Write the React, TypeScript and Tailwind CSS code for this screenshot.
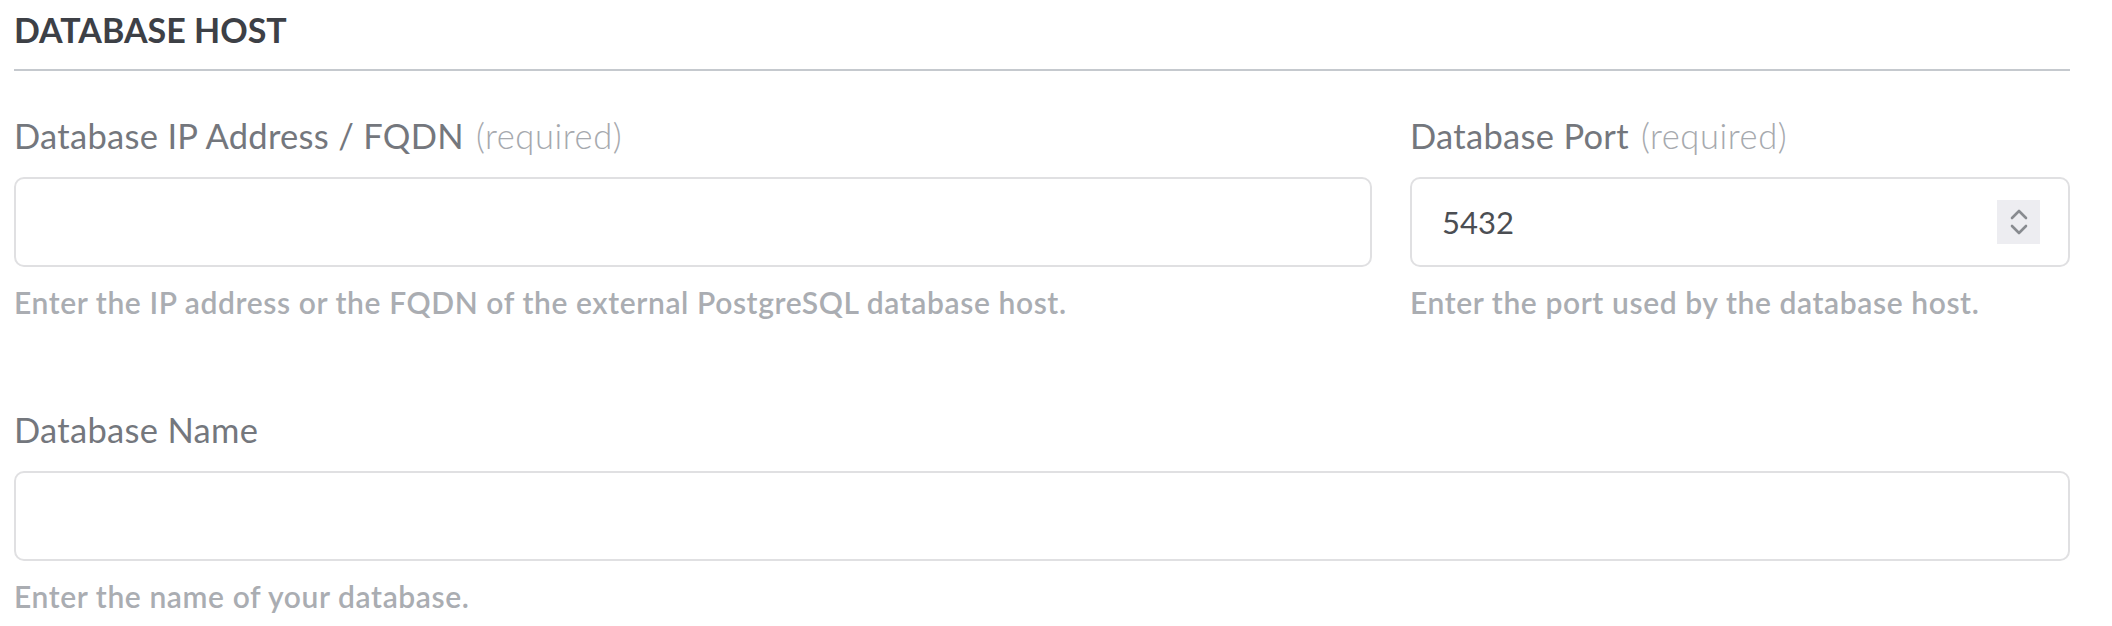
import type { ReactNode } from "react";

const font = { fontFamily: "Lato, 'Noto Sans', sans-serif" };

function Label({ text, required }: { text: string; required?: boolean }) {
  return (
    <label className="block text-[34.5px] leading-[40px] tracking-[0.3px] text-[#74777d] mb-[21px]">
      {text}
      {required && <span className="ml-[12px] font-light tracking-[0.6px] text-[#a6a9ae]">(required)</span>}
    </label>
  );
}

function Help({ children }: { children: ReactNode }) {
  return (
    <p className="mt-[17px] text-[30px] leading-[36px] font-semibold tracking-[0.6px] text-[#aaadb2]">
      {children}
    </p>
  );
}

function Spinner() {
  return (
    <div className="flex h-[44px] w-[43px] flex-col items-center justify-center gap-[4px] bg-[#ededf1]">
      <svg width="18" height="11" viewBox="0 0 18 11" fill="none">
        <path d="M2 9 L9 2 L16 9" stroke="#888b90" strokeWidth="2.6" strokeLinecap="round" strokeLinejoin="round" />
      </svg>
      <svg width="18" height="11" viewBox="0 0 18 11" fill="none">
        <path d="M2 2 L9 9 L16 2" stroke="#888b90" strokeWidth="2.6" strokeLinecap="round" strokeLinejoin="round" />
      </svg>
    </div>
  );
}

export default function App() {
  return (
    <div className="min-h-[626px] bg-white pl-[14px] pr-[42px]" style={font}>
      <h2 className="border-b-2 border-[#c5c9ce] pt-[9px] pb-[18px] text-[34px] leading-[42px] font-bold text-[#3d4046]">
        DATABASE HOST
      </h2>

      <div className="mt-[45px] grid grid-cols-3 gap-x-[38px]">
        <div className="col-span-2">
          <Label text="Database IP Address / FQDN" required />
          <input className="block h-[90px] w-full rounded-[10px] border-2 border-[#e0e0e2] px-[30px] text-[31px] text-[#4b4e53] outline-none" />
          <Help>Enter the IP address or the FQDN of the external PostgreSQL database host.</Help>
        </div>
        <div>
          <Label text="Database Port" required />
          <div className="flex h-[90px] items-center rounded-[10px] border-2 border-[#e0e0e2] pl-[30px] pr-[28px]">
            <span className="flex-1 text-[31px] leading-none text-[#4b4e53]">5432</span>
            <Spinner />
          </div>
          <Help>Enter the port used by the database host.</Help>
        </div>
      </div>

      <div className="mt-[90px]">
        <Label text="Database Name" />
        <input className="block h-[90px] w-full rounded-[10px] border-2 border-[#e0e0e2] px-[30px] text-[31px] text-[#4b4e53] outline-none" />
        <Help>Enter the name of your database.</Help>
      </div>
    </div>
  );
}
